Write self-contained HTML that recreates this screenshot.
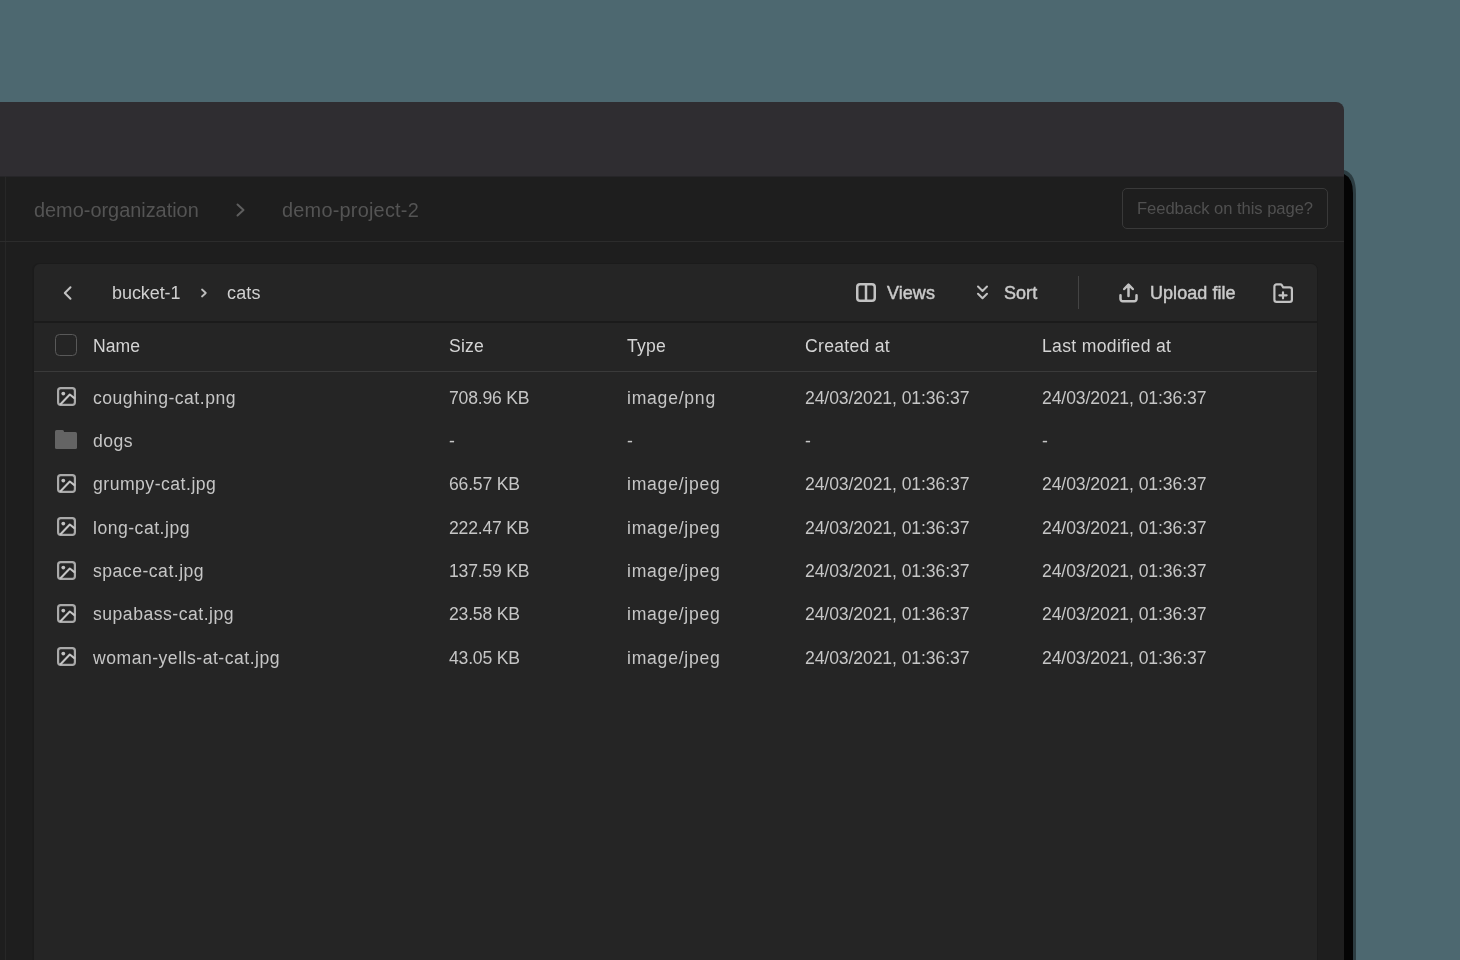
<!DOCTYPE html>
<html><head><meta charset="utf-8">
<style>
*{box-sizing:border-box;margin:0;padding:0}
html,body{width:1460px;height:960px;overflow:hidden;background:#4d6870;font-family:"Liberation Sans",sans-serif;-webkit-font-smoothing:antialiased}
#root{position:absolute;left:0;top:0;width:1460px;height:960px;will-change:transform}
.b{position:absolute}
.t{position:absolute;white-space:nowrap}
svg{position:absolute;overflow:visible}
</style></head><body><div id="root">
<div class="b" style="left:0;top:102px;width:1344px;height:74px;background:#2f2d31;border-top-right-radius:8px"></div>
<div class="b" style="left:0;top:176px;width:1344px;height:784px;background:#1e1e1e"></div>
<div class="b" style="left:0;top:176px;width:1344px;height:1px;background:#262528"></div>
<svg style="left:0;top:0" width="1460" height="960" viewBox="0 0 1460 960"><path d="M1344 170 Q1356 173 1356 194 V960 H1344 Z" fill="rgba(0,0,0,.42)"/><path d="M1344 174 Q1353 178 1353 193 V960 H1344 Z" fill="#040404"/></svg>
<div class="b" style="left:5px;top:176px;width:1px;height:784px;background:#272727"></div>
<div class="b" style="left:0;top:241px;width:1344px;height:1px;background:#2c2c2c"></div>
<div class="t" style="left:34px;top:198.10px;font-size:19.9px;line-height:24px;color:#545454;letter-spacing:0px;">demo-organization</div>
<svg style="left:236px;top:203px" width="9" height="14" viewBox="0 0 9 14"><path d="M1.5 1.5 L7.5 7 L1.5 12.5" fill="none" stroke="#5e5e5e" stroke-width="2" stroke-linecap="round" stroke-linejoin="round"/></svg>
<div class="t" style="left:282px;top:198.10px;font-size:19.9px;line-height:24px;color:#545454;letter-spacing:0.23px;">demo-project-2</div>
<div class="b" style="left:1122px;top:188px;width:206px;height:41px;border:1px solid #393939;border-radius:5px"></div>
<div class="t" style="left:1137px;top:197.15px;font-size:16.6px;line-height:24px;color:#505050;letter-spacing:-0.05px;">Feedback on this page?</div>
<div class="b" style="left:33px;top:263px;width:1285px;height:760px;background:#252525;border:1px solid #1b1b1b;border-radius:7px;box-shadow:-1px 0 0 #1c1c1c"></div>
<div class="b" style="left:34px;top:321px;width:1283px;height:2px;background:#1b1b1b"></div>
<svg style="left:63px;top:286px" width="9" height="14" viewBox="0 0 9 14"><path d="M7.5 1.2 L1.8 7 L7.5 12.8" fill="none" stroke="#c2c2c2" stroke-width="2" stroke-linecap="round" stroke-linejoin="round"/></svg>
<div class="t" style="left:112px;top:280.96px;font-size:18px;line-height:24px;color:#d0d0d0;letter-spacing:-0.07px;">bucket-1</div>
<svg style="left:200px;top:288px" width="8" height="10" viewBox="0 0 8 10"><path d="M2 1.5 L5.8 5 L2 8.5" fill="none" stroke="#bdbdbd" stroke-width="1.8" stroke-linecap="round" stroke-linejoin="round"/></svg>
<div class="t" style="left:227px;top:280.96px;font-size:18px;line-height:24px;color:#d0d0d0;letter-spacing:0.15px;">cats</div>
<svg style="left:856px;top:283px" width="20" height="19" viewBox="0 0 20 19"><rect x="1.25" y="1.25" width="17.5" height="16.5" rx="2.8" fill="none" stroke="#c2c2c2" stroke-width="2.5"/><line x1="10" y1="1.5" x2="10" y2="17.5" stroke="#c2c2c2" stroke-width="2.5"/></svg>
<div class="t" style="left:887px;top:280.96px;font-size:18px;line-height:24px;color:#cacaca;letter-spacing:0.05px;-webkit-text-stroke:0.45px currentColor">Views</div>
<svg style="left:976px;top:285px" width="13" height="14" viewBox="0 0 13 14"><path d="M2 1.5 L6.5 6 L11 1.5 M2 8.75 L6.5 13.3 L11 8.75" fill="none" stroke="#c2c2c2" stroke-width="2" stroke-linecap="round" stroke-linejoin="round"/></svg>
<div class="t" style="left:1004px;top:280.96px;font-size:18px;line-height:24px;color:#cacaca;letter-spacing:0.05px;-webkit-text-stroke:0.45px currentColor">Sort</div>
<div class="b" style="left:1077.5px;top:276px;width:1px;height:33px;background:#444"></div>
<svg style="left:1118px;top:282px" width="21" height="21" viewBox="0 0 21 21"><path d="M2.5 13.3 V17 a2.2 2.2 0 0 0 2.2 2.2 H16.3 a2.2 2.2 0 0 0 2.2 -2.2 V13.3 M10.5 14 V2.8 M6.2 7 L10.5 2.6 L14.8 7" fill="none" stroke="#c2c2c2" stroke-width="2.5" stroke-linecap="round" stroke-linejoin="round"/></svg>
<div class="t" style="left:1150px;top:281.16px;font-size:18px;line-height:24px;color:#cacaca;letter-spacing:0.05px;-webkit-text-stroke:0.45px currentColor">Upload file</div>
<svg style="left:1272px;top:283px" width="22" height="20" viewBox="0 0 22 20"><path d="M2.4 3.6 a2.2 2.2 0 0 1 2.2 -2.2 H8.5 a1.5 1.5 0 0 1 1.2 .6 L11.2 4.4 H17.7 a2.2 2.2 0 0 1 2.2 2.2 V16.7 a2.2 2.2 0 0 1 -2.2 2.2 H4.6 a2.2 2.2 0 0 1 -2.2 -2.2 Z M11 9.3 V15.3 M7.4 12.3 H14.6" fill="none" stroke="#c2c2c2" stroke-width="2.2" stroke-linecap="round" stroke-linejoin="round"/></svg>
<div class="b" style="left:55px;top:334px;width:22px;height:22px;border:1.4px solid #595959;border-radius:4.5px"></div>
<div class="t" style="left:93px;top:333.90px;font-size:17.6px;line-height:24px;color:#d4d4d4;letter-spacing:0px;">Name</div>
<div class="t" style="left:449px;top:333.90px;font-size:17.6px;line-height:24px;color:#d4d4d4;letter-spacing:0.2px;">Size</div>
<div class="t" style="left:627px;top:333.90px;font-size:17.6px;line-height:24px;color:#d4d4d4;letter-spacing:0.2px;">Type</div>
<div class="t" style="left:805px;top:333.90px;font-size:17.6px;line-height:24px;color:#d4d4d4;letter-spacing:0.29px;">Created at</div>
<div class="t" style="left:1042px;top:333.90px;font-size:17.6px;line-height:24px;color:#d4d4d4;letter-spacing:0.32px;">Last modified at</div>
<div class="b" style="left:34px;top:371px;width:1283px;height:1px;background:#3a3a3a"></div>
<svg style="left:56.5px;top:387.20px" width="19" height="19" viewBox="0 0 19 19"><rect x="1.1" y="1.1" width="16.8" height="16.8" rx="2.6" fill="none" stroke="#a9a9a9" stroke-width="2.2"/><circle cx="6.3" cy="6.6" r="1.9" fill="#c0c0c0"/><path d="M3 17.8 L12.8 7.5 L18 11.6" fill="none" stroke="#c4c4c4" stroke-width="2" stroke-linejoin="round"/></svg>
<div class="t" style="left:93px;top:385.60px;font-size:17.6px;line-height:24px;color:#c6c6c6;letter-spacing:0.5px;">coughing-cat.png</div>
<div class="t" style="left:449px;top:385.60px;font-size:17.6px;line-height:24px;color:#c6c6c6;letter-spacing:-0.2px;">708.96 KB</div>
<div class="t" style="left:627px;top:385.60px;font-size:17.6px;line-height:24px;color:#c6c6c6;letter-spacing:0.75px;">image/png</div>
<div class="t" style="left:805px;top:385.60px;font-size:17.6px;line-height:24px;color:#c6c6c6;letter-spacing:-0.1px;">24/03/2021, 01:36:37</div>
<div class="t" style="left:1042px;top:385.60px;font-size:17.6px;line-height:24px;color:#c6c6c6;letter-spacing:-0.1px;">24/03/2021, 01:36:37</div>
<div class="b" style="left:55px;top:432.33px;width:22px;height:17px;background:#646464;border-radius:1.5px"></div><div class="b" style="left:55px;top:430.33px;width:9px;height:4px;background:#646464;border-radius:1.5px 1.5px 0 0"></div>
<div class="t" style="left:93px;top:428.93px;font-size:17.6px;line-height:24px;color:#c6c6c6;letter-spacing:0.5px;">dogs</div>
<div class="t" style="left:449px;top:428.93px;font-size:17.6px;line-height:24px;color:#c6c6c6;letter-spacing:-0.2px;">-</div>
<div class="t" style="left:627px;top:428.93px;font-size:17.6px;line-height:24px;color:#c6c6c6;letter-spacing:0.75px;">-</div>
<div class="t" style="left:805px;top:428.93px;font-size:17.6px;line-height:24px;color:#c6c6c6;letter-spacing:-0.1px;">-</div>
<div class="t" style="left:1042px;top:428.93px;font-size:17.6px;line-height:24px;color:#c6c6c6;letter-spacing:-0.1px;">-</div>
<svg style="left:56.5px;top:473.86px" width="19" height="19" viewBox="0 0 19 19"><rect x="1.1" y="1.1" width="16.8" height="16.8" rx="2.6" fill="none" stroke="#a9a9a9" stroke-width="2.2"/><circle cx="6.3" cy="6.6" r="1.9" fill="#c0c0c0"/><path d="M3 17.8 L12.8 7.5 L18 11.6" fill="none" stroke="#c4c4c4" stroke-width="2" stroke-linejoin="round"/></svg>
<div class="t" style="left:93px;top:472.26px;font-size:17.6px;line-height:24px;color:#c6c6c6;letter-spacing:0.5px;">grumpy-cat.jpg</div>
<div class="t" style="left:449px;top:472.26px;font-size:17.6px;line-height:24px;color:#c6c6c6;letter-spacing:-0.2px;">66.57 KB</div>
<div class="t" style="left:627px;top:472.26px;font-size:17.6px;line-height:24px;color:#c6c6c6;letter-spacing:0.75px;">image/jpeg</div>
<div class="t" style="left:805px;top:472.26px;font-size:17.6px;line-height:24px;color:#c6c6c6;letter-spacing:-0.1px;">24/03/2021, 01:36:37</div>
<div class="t" style="left:1042px;top:472.26px;font-size:17.6px;line-height:24px;color:#c6c6c6;letter-spacing:-0.1px;">24/03/2021, 01:36:37</div>
<svg style="left:56.5px;top:517.19px" width="19" height="19" viewBox="0 0 19 19"><rect x="1.1" y="1.1" width="16.8" height="16.8" rx="2.6" fill="none" stroke="#a9a9a9" stroke-width="2.2"/><circle cx="6.3" cy="6.6" r="1.9" fill="#c0c0c0"/><path d="M3 17.8 L12.8 7.5 L18 11.6" fill="none" stroke="#c4c4c4" stroke-width="2" stroke-linejoin="round"/></svg>
<div class="t" style="left:93px;top:515.59px;font-size:17.6px;line-height:24px;color:#c6c6c6;letter-spacing:0.5px;">long-cat.jpg</div>
<div class="t" style="left:449px;top:515.59px;font-size:17.6px;line-height:24px;color:#c6c6c6;letter-spacing:-0.2px;">222.47 KB</div>
<div class="t" style="left:627px;top:515.59px;font-size:17.6px;line-height:24px;color:#c6c6c6;letter-spacing:0.75px;">image/jpeg</div>
<div class="t" style="left:805px;top:515.59px;font-size:17.6px;line-height:24px;color:#c6c6c6;letter-spacing:-0.1px;">24/03/2021, 01:36:37</div>
<div class="t" style="left:1042px;top:515.59px;font-size:17.6px;line-height:24px;color:#c6c6c6;letter-spacing:-0.1px;">24/03/2021, 01:36:37</div>
<svg style="left:56.5px;top:560.52px" width="19" height="19" viewBox="0 0 19 19"><rect x="1.1" y="1.1" width="16.8" height="16.8" rx="2.6" fill="none" stroke="#a9a9a9" stroke-width="2.2"/><circle cx="6.3" cy="6.6" r="1.9" fill="#c0c0c0"/><path d="M3 17.8 L12.8 7.5 L18 11.6" fill="none" stroke="#c4c4c4" stroke-width="2" stroke-linejoin="round"/></svg>
<div class="t" style="left:93px;top:558.92px;font-size:17.6px;line-height:24px;color:#c6c6c6;letter-spacing:0.5px;">space-cat.jpg</div>
<div class="t" style="left:449px;top:558.92px;font-size:17.6px;line-height:24px;color:#c6c6c6;letter-spacing:-0.2px;">137.59 KB</div>
<div class="t" style="left:627px;top:558.92px;font-size:17.6px;line-height:24px;color:#c6c6c6;letter-spacing:0.75px;">image/jpeg</div>
<div class="t" style="left:805px;top:558.92px;font-size:17.6px;line-height:24px;color:#c6c6c6;letter-spacing:-0.1px;">24/03/2021, 01:36:37</div>
<div class="t" style="left:1042px;top:558.92px;font-size:17.6px;line-height:24px;color:#c6c6c6;letter-spacing:-0.1px;">24/03/2021, 01:36:37</div>
<svg style="left:56.5px;top:603.85px" width="19" height="19" viewBox="0 0 19 19"><rect x="1.1" y="1.1" width="16.8" height="16.8" rx="2.6" fill="none" stroke="#a9a9a9" stroke-width="2.2"/><circle cx="6.3" cy="6.6" r="1.9" fill="#c0c0c0"/><path d="M3 17.8 L12.8 7.5 L18 11.6" fill="none" stroke="#c4c4c4" stroke-width="2" stroke-linejoin="round"/></svg>
<div class="t" style="left:93px;top:602.25px;font-size:17.6px;line-height:24px;color:#c6c6c6;letter-spacing:0.5px;">supabass-cat.jpg</div>
<div class="t" style="left:449px;top:602.25px;font-size:17.6px;line-height:24px;color:#c6c6c6;letter-spacing:-0.2px;">23.58 KB</div>
<div class="t" style="left:627px;top:602.25px;font-size:17.6px;line-height:24px;color:#c6c6c6;letter-spacing:0.75px;">image/jpeg</div>
<div class="t" style="left:805px;top:602.25px;font-size:17.6px;line-height:24px;color:#c6c6c6;letter-spacing:-0.1px;">24/03/2021, 01:36:37</div>
<div class="t" style="left:1042px;top:602.25px;font-size:17.6px;line-height:24px;color:#c6c6c6;letter-spacing:-0.1px;">24/03/2021, 01:36:37</div>
<svg style="left:56.5px;top:647.18px" width="19" height="19" viewBox="0 0 19 19"><rect x="1.1" y="1.1" width="16.8" height="16.8" rx="2.6" fill="none" stroke="#a9a9a9" stroke-width="2.2"/><circle cx="6.3" cy="6.6" r="1.9" fill="#c0c0c0"/><path d="M3 17.8 L12.8 7.5 L18 11.6" fill="none" stroke="#c4c4c4" stroke-width="2" stroke-linejoin="round"/></svg>
<div class="t" style="left:93px;top:645.58px;font-size:17.6px;line-height:24px;color:#c6c6c6;letter-spacing:0.5px;">woman-yells-at-cat.jpg</div>
<div class="t" style="left:449px;top:645.58px;font-size:17.6px;line-height:24px;color:#c6c6c6;letter-spacing:-0.2px;">43.05 KB</div>
<div class="t" style="left:627px;top:645.58px;font-size:17.6px;line-height:24px;color:#c6c6c6;letter-spacing:0.75px;">image/jpeg</div>
<div class="t" style="left:805px;top:645.58px;font-size:17.6px;line-height:24px;color:#c6c6c6;letter-spacing:-0.1px;">24/03/2021, 01:36:37</div>
<div class="t" style="left:1042px;top:645.58px;font-size:17.6px;line-height:24px;color:#c6c6c6;letter-spacing:-0.1px;">24/03/2021, 01:36:37</div>
</div></body></html>
